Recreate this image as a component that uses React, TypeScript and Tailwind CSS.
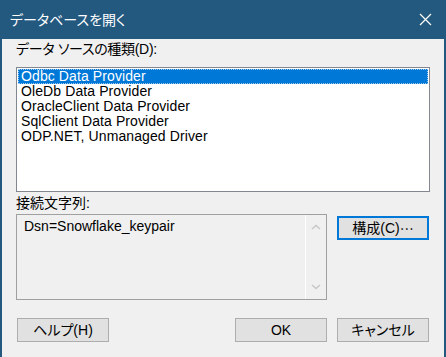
const jp = "font-['Liberation_Sans','Noto_Sans_CJK_JP',sans-serif] [font-feature-settings:'palt']";

const providers = [
  "Odbc Data Provider",
  "OleDb Data Provider",
  "OracleClient Data Provider",
  "SqlClient Data Provider",
  "ODP.NET, Unmanaged Driver",
];

function Button({ label, focused, className = "" }: { label: React.ReactNode; focused?: boolean; className?: string }) {
  return (
    <button
      className={`h-6 w-[92px] bg-[#e1e1e1] text-[14px] leading-none text-black flex items-center justify-center ${
        focused ? "border-2 border-[#0078d7]" : "border border-[#adadad]"
      } ${className}`}
    >
      {label}
    </button>
  );
}

export default function App() {
  return (
    <div className={`w-[446px] h-[357px] flex flex-col bg-[#f0f0f0] border-x-2 border-[#23587f] ${jp}`}>
      <div className="h-[39px] shrink-0 bg-[#23587f] flex items-center justify-between pl-[10px] pr-[14px] -mx-[2px]">
        <span className="text-white text-[14px] leading-none">データベースを開く</span>
        <svg width="13" height="13" viewBox="0 0 13 13" className="text-white">
          <path d="M1 1 L12 12 M12 1 L1 12" stroke="currentColor" strokeWidth="1.2" fill="none" />
        </svg>
      </div>

      <div className="flex flex-col px-[14px] pt-[3px] text-[14px] text-black">
        <div className="h-[15px] leading-[15px] tracking-[-0.3px]">データ ソースの種類(D):</div>

        <div className="mt-[10px] h-[125px] border border-[#828790] bg-white p-px">
          {providers.map((p, i) => (
            <div
              key={p}
              className={`h-[15px] leading-[15px] pl-[3px] tracking-[0.1px] ${
                i === 0 ? "bg-[#0078d7] text-white outline-1 outline-dotted outline-[#9cc8ee] -outline-offset-1" : ""
              }`}
            >
              {p}
            </div>
          ))}
        </div>

        <div className="mt-[4px] h-[15px] leading-[15px]">接続文字列:</div>

        <div className="mt-[3px] flex gap-[10px]">
          <div className="w-[311px] h-[86px] border border-[#a0a0a0] bg-[#f0f0f0] flex">
            <div className="flex-1 pl-[7px] pt-[3px] leading-[16px]">Dsn=Snowflake_keypair</div>
            <div className="w-[21px] border-l border-white flex flex-col items-center justify-between py-[9px]">
              <svg width="10" height="6" viewBox="0 0 10 6">
                <path d="M1 5 L5 1.5 L9 5" stroke="#c8c8c8" strokeWidth="1.6" fill="none" />
              </svg>
              <svg width="10" height="6" viewBox="0 0 10 6">
                <path d="M1 1 L5 4.5 L9 1" stroke="#c8c8c8" strokeWidth="1.6" fill="none" />
              </svg>
            </div>
          </div>
          <Button
            label={
              <>
                構成(C)<span className="font-['Noto_Sans_CJK_JP',sans-serif]">⋯</span>
              </>
            }
            focused
            className="mt-[2px]"
          />
        </div>

        <div className="mt-[18px] flex items-center">
          <Button label="ヘルプ(H)" className="ml-px w-[91px]" />
          <div className="flex-1" />
          <Button label="OK" className="w-[91px]" />
          <Button label="キャンセル" className="ml-[10px] mr-px" />
        </div>
      </div>
    </div>
  );
}
